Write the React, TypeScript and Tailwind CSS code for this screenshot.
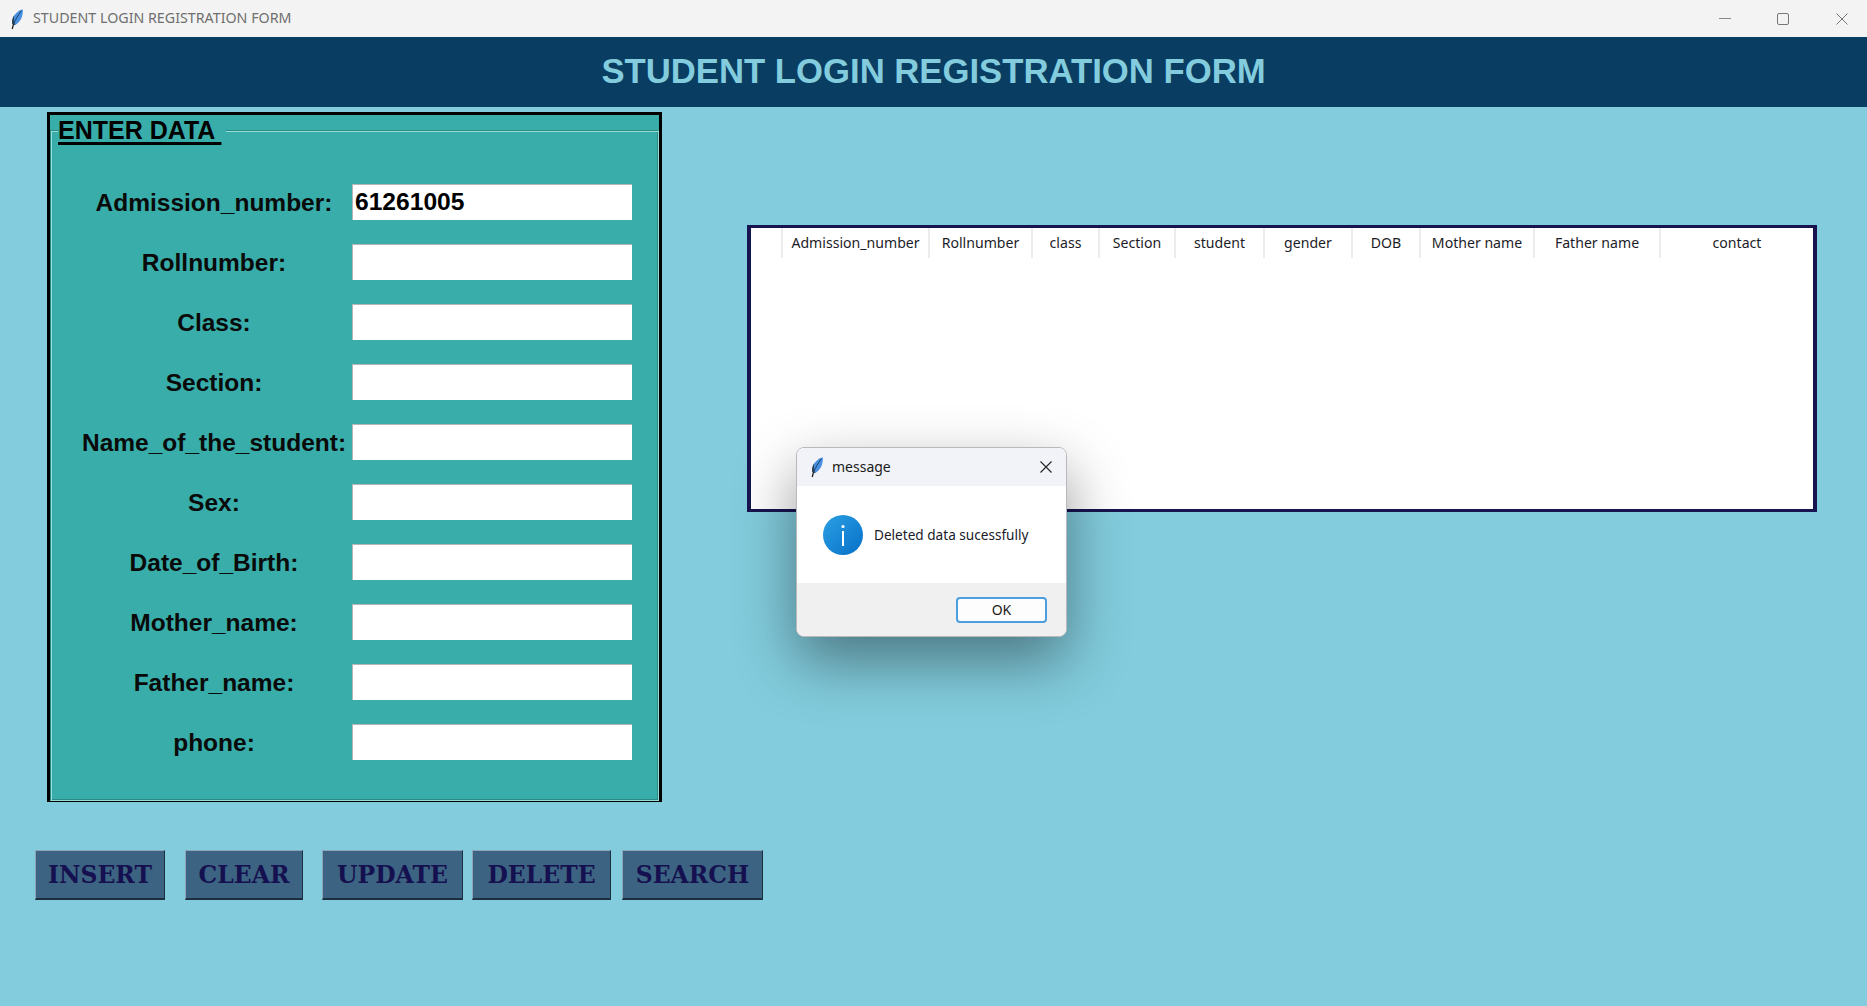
import React from "react";

const fields = [
    { label: "Admission_number:", value: "61261005" },
    { label: "Rollnumber:", value: "" },
    { label: "Class:", value: "" },
    { label: "Section:", value: "" },
    { label: "Name_of_the_student:", value: "" },
    { label: "Sex:", value: "" },
    { label: "Date_of_Birth:", value: "" },
    { label: "Mother_name:", value: "" },
    { label: "Father_name:", value: "" },
    { label: "phone:", value: "" },
];

const columns = [
    { title: "", width: "w-[32px]" },
    { title: "Admission_number", width: "w-[147px]" },
    { title: "Rollnumber", width: "w-[103px]" },
    { title: "class", width: "w-[67px]" },
    { title: "Section", width: "w-[76px]" },
    { title: "student", width: "w-[89px]" },
    { title: "gender", width: "w-[88px]" },
    { title: "DOB", width: "w-[68px]" },
    { title: "Mother name", width: "w-[114px]" },
    { title: "Father name", width: "w-[126px]" },
    { title: "contact", width: "w-[152px]" },
];

const buttons = [
    { title: "INSERT", className: "w-[130px]" },
    { title: "CLEAR", className: "w-[118px] ml-[20px]" },
    { title: "UPDATE", className: "w-[141px] ml-[19px]" },
    { title: "DELETE", className: "w-[139px] ml-[9px]" },
    { title: "SEARCH", className: "w-[141px] ml-[11px]" },
];

const Feather = ({ className }: { className: string }) => (
    <svg viewBox="0 0 16 24" className={className}>
        <path d="M2.5 17.5C1.5 11 6 3.5 14.5 0.8 15.5 8 12 15.5 5.8 19Z" fill="#4a90e0" />
        <path d="M4.6 17C6.4 12.5 9.2 7.5 13 2.6" stroke="#12345f" strokeWidth="1" fill="none" />
        <path d="M2.5 17.5C1.9 14 2.8 10.5 4.8 7.6 4.4 11.5 4.4 14.5 5.8 19Z" fill="#2b3f55" />
        <path d="M4 17.5L2.6 23.4" stroke="#222" strokeWidth="1.5" fill="none" />
    </svg>
);

const TitleBar = () => (
    <div className="flex h-[37px] items-center bg-[#f3f3f3]">
        <Feather className="ml-[10px] h-[22px] w-[14px]" />
        <span className="ml-[9px] pb-[2px] font-['Noto_Sans',sans-serif] text-[14.25px] text-[#6f6f6f]">STUDENT LOGIN REGISTRATION FORM</span>
        <div className="ml-auto flex items-center pr-[19px]">
            <svg viewBox="0 0 12 12" className="h-[12px] w-[12px]">
                <path d="M0 5.5H12" stroke="#8a8a8a" strokeWidth="1" />
            </svg>
            <svg viewBox="0 0 12 12" className="ml-[46px] h-[12px] w-[12px]">
                <rect x="0.5" y="0.5" width="11" height="11" rx="1.5" stroke="#777" strokeWidth="1" fill="none" />
            </svg>
            <svg viewBox="0 0 12 12" className="ml-[47px] h-[12px] w-[12px]">
                <path d="M0.5 0.5L11.5 11.5M11.5 0.5L0.5 11.5" stroke="#777" strokeWidth="1" />
            </svg>
        </div>
    </div>
);

const EntryPanel = () => (
    <div className="h-[690px] w-[615px] shrink-0 border-[3px] border-black bg-[#38ada9] pt-[15px]">
        <div className="relative h-[671px] border border-t-[#2a8a86] border-r-[#9adbd6] border-b-[#9adbd6] border-l-[#2a8a86] pt-[53px] pl-[29px] shadow-[inset_1px_1px_0_#9adbd6,inset_-1px_-1px_0_#2a8a86]">
            <span className="absolute top-[-15px] left-[7px] bg-[#38ada9] pr-[5px] font-['Liberation_Sans',sans-serif] text-[25px] leading-[28px] font-bold whitespace-pre text-black underline decoration-[3px] underline-offset-[3px]">ENTER DATA </span>
            <div className="flex flex-col gap-[24px]">
                {fields.map((field) => (
                    <div key={field.label} className="flex h-[36px] items-center">
                        <label className="w-[268px] pt-[2px] text-center font-['Liberation_Sans',sans-serif] text-[24.5px] font-bold whitespace-nowrap text-[#0a0a0a]">{field.label}</label>
                        <input
                            readOnly
                            value={field.value}
                            className="ml-[4px] h-[36px] w-[280px] border-t border-l border-[#b5b5b5] bg-white pl-[2px] font-['Liberation_Sans',sans-serif] text-[24.6px] font-bold text-black outline-none"
                        />
                    </div>
                ))}
            </div>
        </div>
    </div>
);

const DataTable = () => (
    <div className="mt-[113px] ml-[85px] h-[287px] w-[1070px] border-x-4 border-y-[3px] border-[#17144f] bg-white">
        <div className="flex h-[30px]">
            {columns.map((column) => (
                <div key={column.title} className={`${column.width} flex items-center justify-center border-r-2 border-[#ececec] pb-[1px] font-['Noto_Sans',sans-serif] text-[14.1px] text-[#1c1c28] last:border-r-0`}>
                    {column.title}
                </div>
            ))}
        </div>
    </div>
);

const MessageDialog = () => (
    <div className="absolute top-[447px] left-[796px] w-[271px] overflow-hidden rounded-[8px] border border-[#b9b9b9] bg-white shadow-[0_24px_60px_rgba(0,0,0,0.42)]">
        <div className="flex h-[38px] items-center bg-[#f1f3f9] pl-[13px]">
            <Feather className="h-[22px] w-[14px]" />
            <span className="ml-[8px] pb-[2px] font-['Noto_Sans',sans-serif] text-[14px] text-[#1a1a1a]">message</span>
            <svg viewBox="0 0 12 12" className="mr-[14px] ml-auto h-[12px] w-[12px]">
                <path d="M0.5 0.5L11.5 11.5M11.5 0.5L0.5 11.5" stroke="#222" strokeWidth="1.1" />
            </svg>
        </div>
        <div className="flex h-[97px] items-center pl-[26px]">
            <div className="flex h-[40px] w-[40px] items-center justify-center rounded-full bg-gradient-to-br from-[#2a9fe3] to-[#0670c8]">
                <svg viewBox="0 0 40 40" className="h-[40px] w-[40px]">
                    <circle cx="20" cy="11.5" r="1.6" fill="#fff" />
                    <rect x="19" y="16" width="2" height="15" fill="#fff" />
                </svg>
            </div>
            <span className="ml-[11px] pt-[2px] font-['Noto_Sans',sans-serif] text-[13.6px] text-[#1a1a2a]">Deleted data sucessfully</span>
        </div>
        <div className="flex h-[53px] items-center justify-end bg-[#f0f0f0] pt-[1px] pr-[19px]">
            <button className="h-[26px] w-[91px] rounded-[4px] border-2 border-[#4a9fe0] bg-[#fdfdfd] font-['Noto_Sans',sans-serif] text-[14px] leading-none text-[#1a1a1a]">OK</button>
        </div>
    </div>
);

const App: React.FC = () => {
    return (
        <div className="relative h-[1006px] w-[1867px] overflow-hidden bg-[#82ccdd]">
            <TitleBar />
            <div className="flex h-[70px] items-center justify-center bg-[#0a3d62] pb-[2px]">
                <h1 className="font-['Liberation_Sans',sans-serif] text-[34.7px] font-bold text-[#82ccdd]">STUDENT LOGIN REGISTRATION FORM</h1>
            </div>
            <div className="flex items-start pt-[5px] pl-[47px]">
                <EntryPanel />
                <DataTable />
            </div>
            <div className="mt-[48px] flex pl-[35px]">
                {buttons.map((button) => (
                    <button key={button.title} className={`${button.className} h-[50px] border border-t-[#8ea3b5] border-r-[#1b2f40] border-b-2 border-b-[#1b2f40] border-l-[#8ea3b5] bg-[#3c6382] pt-[2px] font-['DejaVu_Serif',serif] text-[23.5px] font-bold text-[#15104f]`}>
                        {button.title}
                    </button>
                ))}
            </div>
            <MessageDialog />
        </div>
    );
};

export default App;
